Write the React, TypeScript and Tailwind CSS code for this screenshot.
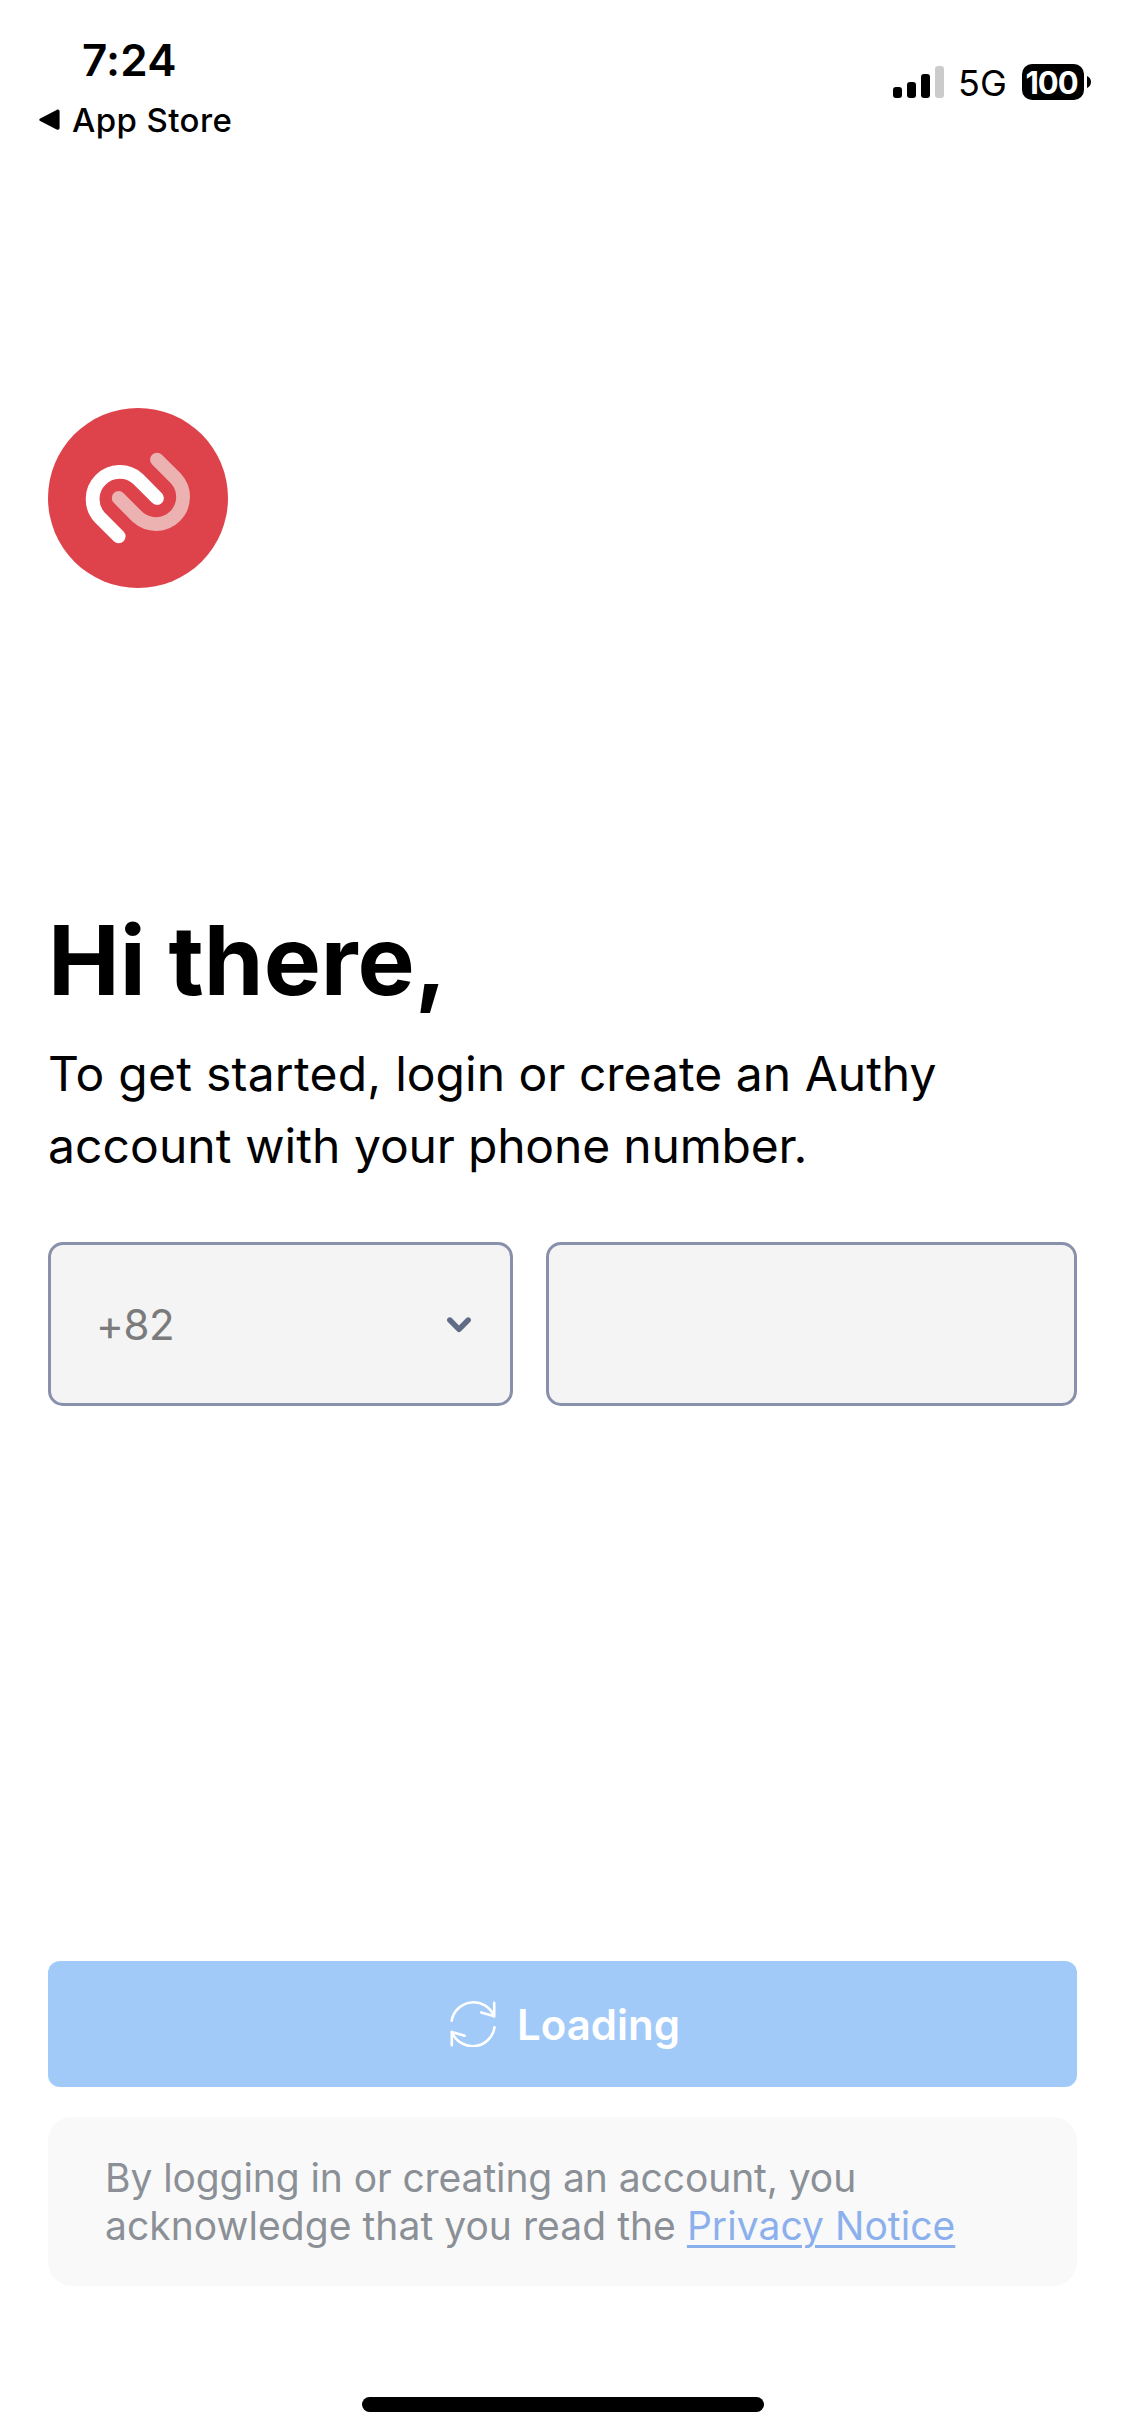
function SignalBars() {
  return (
    <div className="flex items-end gap-[5px]">
      <span className="h-[11px] w-[9px] rounded-[3px] bg-black" />
      <span className="h-4 w-[9px] rounded-[3px] bg-black" />
      <span className="h-6 w-[9px] rounded-[3px] bg-black" />
      <span className="h-8 w-[9px] rounded-[3px] bg-[#cbcbcb]" />
    </div>
  );
}

function Battery() {
  return (
    <div className="flex items-center gap-[3px]">
      <div className="flex h-9 w-[62px] items-center justify-center rounded-[10px] bg-black pr-[3px] text-[31px] leading-none font-bold tracking-[-1px] text-white">
        100
      </div>
      <svg width="4" height="12" viewBox="0 0 4 12" fill="currentColor">
        <path d="M0 0C2.4 1 4 3.2 4 6S2.4 11 0 12Z" />
      </svg>
    </div>
  );
}

function StatusBar() {
  return (
    <header className="flex h-[150px] items-start justify-between pr-[34px] pl-[39px]">
      <div className="pt-[34px]">
        <p className="pl-[43px] text-[44px] leading-[52px] font-semibold tracking-[0.2px]">
          7:24
        </p>
        <div className="mt-[14px] flex items-center gap-3">
          <svg width="21" height="22" viewBox="0 0 21 22" fill="currentColor">
            <path d="M1.2 9.6 17.6.9C19.3 0 20.6.7 20.6 2.5V18.8C20.6 20.6 19.3 21.3 17.6 20.4L1.2 12.1C0 11.4 0 10.3 1.2 9.6Z" />
          </svg>
          <span className="text-[33px] leading-10 font-medium tracking-[0.4px]">
            App Store
          </span>
        </div>
      </div>
      <div className="flex pt-16">
        <div className="pt-[2px]">
          <SignalBars />
        </div>
        <span className="ml-[14px] w-[49px] pt-px text-4xl leading-9">5G</span>
        <div className="ml-[15px]">
          <Battery />
        </div>
      </div>
    </header>
  );
}

function Logo() {
  return (
    <svg
      className="size-[180px]"
      viewBox="0 0 180 180"
      fill="none"
      strokeWidth="13.8"
      strokeLinecap="round"
    >
      <circle cx="90" cy="90" r="90" fill="#de434b" />
      <path
        d="M70.7 90 89.8 109.2A27.2 27.2 0 0 0 128.2 70.8L109 51.7"
        stroke="#ebb2b1"
      />
      <path
        d="M109 90 89.9 70.8A27.2 27.2 0 0 0 51.5 109.2L70.7 128.3"
        stroke="#fff"
      />
    </svg>
  );
}

function LoadingIcon() {
  return (
    <svg
      className="size-[46px]"
      viewBox="0 0 46 46"
      fill="none"
      stroke="currentColor"
      strokeWidth="2.6"
      strokeLinecap="round"
      strokeLinejoin="round"
    >
      <path d="M1.7 19.7A22.1 22.1 0 0 1 44 15.2" />
      <path d="M44.2 1.9V15.3L31.3 11.4" />
      <path d="M44.5 26.3A22.1 22.1 0 0 1 2 31" />
      <path d="M1.8 44.2V31L14.7 34.7" />
    </svg>
  );
}

export default function App() {
  return (
    <div className="flex h-[2436px] w-[1125px] flex-col bg-white font-['Inter',sans-serif] text-black">
      <StatusBar />

      <main className="flex flex-1 flex-col px-12">
        <div className="mt-[258px]">
          <Logo />
        </div>

        <h1 className="mt-[314px] text-8xl leading-[116px] font-bold">
          Hi there,
        </h1>
        <p className="mt-5 text-5xl leading-[72px] whitespace-nowrap">
          <span className="block tracking-[0.01px]">
            <span className="tracking-[0.25px]">To get started, </span>
            login or create an Authy
          </span>
          <span className="block tracking-[-0.18px]">
            <span className="tracking-[0.08px]">account with </span>
            your phone number.
          </span>
        </p>

        <div className="mt-[60px] flex h-[164px] gap-[33px]">
          <button className="flex w-[465px] items-center justify-between rounded-[15px] border-3 border-[#8890ab] bg-[#f4f4f4] pr-[39px] pl-[45px] text-[42px] tracking-[-0.4px] text-[#7b7b7b]">
            +82
            <svg
              className="mt-[2px]"
              width="24"
              height="16"
              viewBox="0 0 24 16"
              fill="none"
              stroke="#606b86"
              strokeWidth="5.4"
              strokeLinecap="round"
              strokeLinejoin="round"
            >
              <path d="M2.8 3 12 12.4 21.2 3" />
            </svg>
          </button>
          <input
            type="tel"
            className="w-[531px] rounded-[15px] border-3 border-[#8890ab] bg-[#f4f4f4] px-[46px] text-[42px]"
          />
        </div>

        <button className="mt-[555px] flex h-[126px] shrink-0 items-center justify-center gap-[21px] rounded-xl bg-[#a2caf9] pl-[5px] text-[42px] font-semibold text-white">
          <LoadingIcon />
          Loading
        </button>

        <div className="mt-[30px] h-[169px] rounded-3xl bg-[#f9f9f9] px-[57px] pt-[37px] text-[39px] leading-12 whitespace-nowrap text-[#8b9097]">
          <span className="block tracking-[-0.09px]">
            By logging in or creating an account, you
          </span>
          <span className="block tracking-[0.05px]">
            acknowledge that you read the{' '}
            <a
              href="#"
              className="text-[#8bb0ed] underline decoration-3 underline-offset-[5px]"
            >
              Privacy Notice
            </a>
          </span>
        </div>
      </main>

      <div className="mx-auto mb-6 h-[15px] w-[402px] rounded-full bg-black" />
    </div>
  );
}
